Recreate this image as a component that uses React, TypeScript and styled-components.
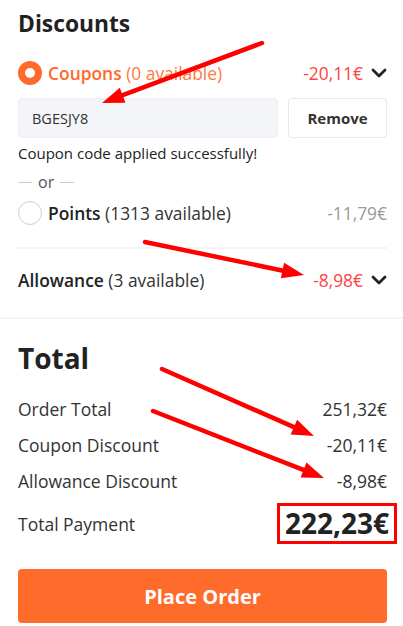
import React from "react";
import styled, { createGlobalStyle } from "styled-components";

const GlobalStyle = createGlobalStyle`
  html, body { margin: 0; padding: 0; background: #fff; }
  body { font-family: "Open Sans", "Noto Sans", Arial, sans-serif; color: #222; }
  * { box-sizing: border-box; }
`;

const Page = styled.div`
  position: relative;
  width: 403px;
  height: 626px;
  overflow: hidden;
  background: #fff;
`;

const Section = styled.section`
  padding: 0 16px 0 18px;
  display: flex;
  flex-direction: column;
`;

const Title = styled.h2<{ $size: number; $top: number; $weight: number }>`
  margin: ${(p) => p.$top}px 0 0 0;
  font-size: ${(p) => p.$size}px;
  line-height: 32px;
  font-weight: ${(p) => p.$weight};
  color: #222;
`;

const OptionRow = styled.div<{ $top: number }>`
  display: flex;
  align-items: center;
  height: 32px;
  margin-top: ${(p) => p.$top}px;
`;

const Radio = styled.span<{ $checked?: boolean }>`
  width: 24px;
  height: 24px;
  border-radius: 50%;
  flex: none;
  margin-right: 6px;
  background: #fff;
  border: ${(p) => (p.$checked ? "7px solid #ff6a2c" : "1px solid #cfcfcf")};
`;

const OptionLabel = styled.span<{ $tone: "orange" | "dark" }>`
  flex: 1;
  font-size: 17.4px;
  color: ${(p) => (p.$tone === "orange" ? "#ff6a2c" : "#222")};
  b {
    font-weight: 600;
  }
  span {
    font-weight: 400;
    color: ${(p) => (p.$tone === "orange" ? "#ff7a40" : "#333")};
  }
`;

const Amount = styled.span<{ $tone: "red" | "grey" }>`
  font-size: 17.4px;
  color: ${(p) => (p.$tone === "red" ? "#ff4242" : "#999")};
`;

const Chevron = styled.svg`
  width: 16px;
  height: 10px;
  margin-left: 8px;
  flex: none;
`;

const CouponForm = styled.div`
  display: flex;
  gap: 10px;
  margin-top: 9px;
`;

const CodeInput = styled.div`
  flex: 1;
  height: 40px;
  background: #f4f5f9;
  border: 1px solid #eceef2;
  border-radius: 4px;
  display: flex;
  align-items: center;
  padding-left: 13px;
  font-size: 14.5px;
  color: #333;
`;

const RemoveButton = styled.button`
  width: 99px;
  height: 40px;
  background: #fff;
  border: 1px solid #e8e8e8;
  border-radius: 4px;
  font-family: inherit;
  font-size: 15px;
  font-weight: 700;
  color: #333;
`;

const Success = styled.div`
  margin-top: 6px;
  font-size: 15px;
  line-height: 18px;
  color: #222;
`;

const OrLine = styled.div`
  display: flex;
  align-items: center;
  gap: 6px;
  margin-top: 11px;
  font-size: 16px;
  line-height: 18px;
  color: #555;
  &::before,
  &::after {
    content: "";
    width: 14px;
    height: 1px;
    background: #ccc;
  }
`;

const Divider = styled.hr`
  border: 0;
  height: 2px;
  background: #f4f4f8;
  margin: 18px 0 0 0;
`;

const SectionDivider = styled.div`
  height: 2px;
  background: #f4f3f8;
  margin-top: 21px;
`;

const SummaryList = styled.div`
  display: flex;
  flex-direction: column;
  margin-top: 24px;
  gap: 14px;
`;

const SummaryRow = styled.div`
  display: flex;
  justify-content: space-between;
  align-items: center;
  height: 22px;
  font-size: 17.5px;
  color: #333;
`;

const TotalRow = styled.div`
  display: flex;
  justify-content: space-between;
  align-items: center;
  margin-top: -3px;
  height: 41px;
  font-size: 17.5px;
  color: #333;
`;

const TotalValue = styled.span`
  font-size: 28px;
  font-weight: 700;
  color: #222;
  border: 3px solid #ff0000;
  padding: 0 5px;
  height: 41px;
  line-height: 35px;
  margin-right: -10px;
`;

const PlaceOrder = styled.button`
  margin-top: 25px;
  height: 54px;
  width: 100%;
  background: #ff6b2b;
  border: 0;
  border-radius: 4px;
  color: #fff;
  font-family: inherit;
  font-size: 20px;
  font-weight: 700;
`;

const Overlay = styled.svg`
  position: absolute;
  left: 0;
  top: 0;
  width: 403px;
  height: 626px;
  pointer-events: none;
`;

type ArrowProps = { x1: number; y1: number; x2: number; y2: number };

const Arrow = ({ x1, y1, x2, y2 }: ArrowProps) => {
  const dx = x2 - x1;
  const dy = y2 - y1;
  const len = Math.hypot(dx, dy);
  const ux = dx / len;
  const uy = dy / len;
  const hl = 22;
  const hw = 8;
  const bx = x2 - ux * hl;
  const by = y2 - uy * hl;
  const px = -uy;
  const py = ux;
  const pts = `${x2},${y2} ${bx + px * hw},${by + py * hw} ${bx - px * hw},${by - py * hw}`;
  return (
    <g>
      <line x1={x1} y1={y1} x2={bx + ux * 2} y2={by + uy * 2} stroke="#f00" strokeWidth={4.5} strokeLinecap="round" />
      <polygon points={pts} fill="#f00" />
    </g>
  );
};

const ChevronIcon = () => (
  <Chevron viewBox="0 0 16 10">
    <polyline points="2,2 8,8 14,2" fill="none" stroke="#222" strokeWidth={2.8} strokeLinecap="round" strokeLinejoin="round" />
  </Chevron>
);

export default function App() {
  return (
    <Page>
      <GlobalStyle />
      <Section>
        <Title $size={22.8} $top={8} $weight={700}>Discounts</Title>
        <OptionRow $top={17}>
          <Radio $checked />
          <OptionLabel $tone="orange">
            <b>Coupons</b> <span>(0 available)</span>
          </OptionLabel>
          <Amount $tone="red">-20,11€</Amount>
          <ChevronIcon />
        </OptionRow>
        <CouponForm>
          <CodeInput>BGESJY8</CodeInput>
          <RemoveButton>Remove</RemoveButton>
        </CouponForm>
        <Success>Coupon code applied successfully!</Success>
        <OrLine>or</OrLine>
        <OptionRow $top={6}>
          <Radio />
          <OptionLabel $tone="dark">
            <b>Points</b> <span>(1313 available)</span>
          </OptionLabel>
          <Amount $tone="grey">-11,79€</Amount>
        </OptionRow>
        <Divider />
        <OptionRow $top={15}>
          <OptionLabel $tone="dark">
            <b>Allowance</b> <span>(3 available)</span>
          </OptionLabel>
          <Amount $tone="red">-8,98€</Amount>
          <ChevronIcon />
        </OptionRow>
      </Section>
      <SectionDivider />
      <Section>
        <Title $size={28} $top={23} $weight={700}>Total</Title>
        <SummaryList>
          <SummaryRow>
            <span>Order Total</span>
            <span>251,32€</span>
          </SummaryRow>
          <SummaryRow>
            <span>Coupon Discount</span>
            <span>-20,11€</span>
          </SummaryRow>
          <SummaryRow>
            <span>Allowance Discount</span>
            <span>-8,98€</span>
          </SummaryRow>
          <TotalRow>
            <span>Total Payment</span>
            <TotalValue>222,23€</TotalValue>
          </TotalRow>
        </SummaryList>
        <PlaceOrder>Place Order</PlaceOrder>
      </Section>
      <Overlay viewBox="0 0 403 626">
        <Arrow x1={262} y1={43} x2={102} y2={103} />
        <Arrow x1={145} y1={242} x2={304} y2={275} />
        <Arrow x1={162} y1={369} x2={314} y2={436} />
        <Arrow x1={153} y1={411} x2={324} y2={478} />
      </Overlay>
    </Page>
  );
}
